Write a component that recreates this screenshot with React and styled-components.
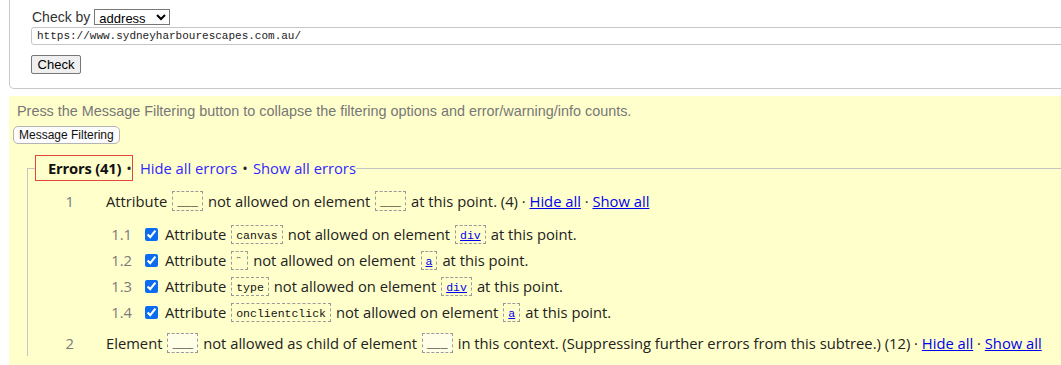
import React from "react";
import styled, { createGlobalStyle } from "styled-components";

const Global = createGlobalStyle`
  html, body { margin: 0; padding: 0; background: #fff; overflow: hidden; }
  body { font-family: "Liberation Sans", Arial, sans-serif; }
`;

const Page = styled.div`
  width: 1061px;
  height: 365px;
  overflow: hidden;
`;

const Panel = styled.form`
  margin: 0 -40px 0 9px;
  border: 1px solid #c8c8c8;
  border-top: none;
  border-radius: 0 0 5px 5px;
  padding: 9px 0 14px 21px;
`;

const CheckByRow = styled.div`
  display: flex;
  align-items: center;
  height: 16px;
  font-size: 14px;
  color: #333;
`;

const Label = styled.span`
  margin: 0 4px 0 1px;
`;

const Select = styled.select`
  height: 16px;
  width: 76px;
  font: 13px "Liberation Sans", Arial, sans-serif;
  color: #000;
  border: 1px solid #767676;
  border-radius: 0;
  padding: 0;
  background: #fff;
`;

const UrlInput = styled.input`
  display: block;
  box-sizing: border-box;
  margin-top: 2px;
  width: 100%;
  height: 18px;
  border: 1px solid #c6c6c6;
  border-radius: 3px;
  padding: 0 5px;
  font: 11px "Liberation Mono", "Courier New", monospace;
  color: #222;
  background: #fff;
  outline: none;
`;

const CheckButton = styled.button`
  display: block;
  margin-top: 10px;
  width: 50px;
  height: 19px;
  padding: 0;
  font: 13px "Liberation Sans", Arial, sans-serif;
  color: #000;
  background: #efefef;
  border: 1px solid #767676;
  border-radius: 2px;
`;

const Results = styled.section`
  margin: 7px -40px 0 9px;
  background: #ffffcc;
  padding: 0 0 40px 4px;
`;

const Hint = styled.p`
  margin: 0 0 0 4px;
  padding-top: 7px;
  font-size: 14.4px;
  line-height: 16px;
  color: #777;
`;

const FilterButton = styled.button`
  display: block;
  margin-top: 7px;
  height: 18px;
  padding: 0 5px;
  font: 12px "Liberation Sans", Arial, sans-serif;
  color: #111;
  background: #fcfcfc;
  border: 1px solid #b4b4b4;
  border-radius: 5px;
`;

const Fieldset = styled.fieldset`
  margin: 11px 0 0 14px;
  padding: 7px 0 0 7px;
  border: none;
  border-top: 1px solid #c4c4c4;
  border-left: 1px solid #c4c4c4;
  font-family: "Open Sans", "Noto Sans", sans-serif;
  font-size: 14.75px;
  color: #222;
`;

const Legend = styled.legend`
  padding: 0;
  display: flex;
  align-items: center;
  line-height: 24px;
`;

const ErrorsTitle = styled.span`
  display: inline-flex;
  align-items: center;
  border: 1px solid #e4463b;
  padding: 0 0 0 12px;
  height: 24px;
`;

const Strong = styled.strong`
  font-weight: 700;
  color: #111;
  letter-spacing: -0.2px;
`;

const Bullet = styled.span`
  margin: 0 ${(p) => p.$r || 0}px 0 ${(p) => p.$l || 0}px;
  color: #222;
`;

const LegendLink = styled.a`
  color: #3326ff;
  text-decoration: none;
`;

const Row = styled.div`
  display: flex;
  align-items: center;
  height: 26px;
  white-space: nowrap;
`;

const Num = styled.span`
  width: 39px;
  text-align: right;
  color: #7a7a7a;
  margin-right: ${(p) => p.$gap}px;
`;

const SubList = styled.div`
  margin: 7px 0 5px 58px;
`;

const Check = styled.input`
  margin: 0 7px 0 13px;
  width: 13px;
  height: 13px;
  accent-color: #0b6cf1;
`;

const Code = styled.code`
  display: inline-block;
  box-sizing: border-box;
  font: 11.5px "Liberation Mono", "Courier New", monospace;
  height: ${(p) => (p.$tall ? 20 : 19)}px;
  line-height: ${(p) => (p.$tall ? 21 : 19)}px;
  padding: 0 4px;
  margin: 0 5px;
  border: 1px dashed #9a9a9a;
  background: ${(p) => (p.$light ? "#ffffe8" : "transparent")};
  color: #111;
  overflow: hidden;
`;

const CodeLink = styled.a`
  color: #0000ee;
  text-decoration: underline;
`;

const Link = styled.a`
  color: #0000ee;
  text-decoration: underline;
`;

const Dot = () => <span>&nbsp;·&nbsp;</span>;

const subItems = [
  { n: "1.1", attr: "canvas", el: "div" },
  { n: "1.2", attr: "\u02dd", el: "a" },
  { n: "1.3", attr: "type", el: "div" },
  { n: "1.4", attr: "onclientclick", el: "a" },
];

export default function App() {
  return (
    <Page>
      <Global />
      <Panel onSubmit={(e) => e.preventDefault()}>
        <CheckByRow>
          <Label>Check by</Label>
          <Select defaultValue="address">
            <option value="address">address</option>
            <option value="file">file upload</option>
            <option value="text">text input</option>
          </Select>
        </CheckByRow>
        <UrlInput defaultValue="https://www.sydneyharbourescapes.com.au/" />
        <CheckButton type="button">Check</CheckButton>
      </Panel>
      <Results>
        <Hint>
          Press the Message Filtering button to collapse the filtering options
          and error/warning/info counts.
        </Hint>
        <FilterButton type="button">Message Filtering</FilterButton>
        <Fieldset>
          <Legend>
            <ErrorsTitle>
              <Strong>Errors (41)</Strong>
              <Bullet $l={5}>•</Bullet>
            </ErrorsTitle>
            <Bullet $l={7} />
            <LegendLink href="#">Hide all errors</LegendLink>
            <Bullet $l={5} $r={5}>•</Bullet>
            <LegendLink href="#">Show all errors</LegendLink>
          </Legend>
          <Row>
            <Num $gap={32}>1</Num>
            Attribute<Code $tall>___</Code>not allowed on element
            <Code $tall>___</Code>at this point. (4)
            <Dot />
            <Link href="#">Hide all</Link>
            <Dot />
            <Link href="#">Show all</Link>
          </Row>
          <SubList>
            {subItems.map((it) => (
              <Row key={it.n}>
                <Num $gap={0}>{it.n}</Num>
                <Check type="checkbox" defaultChecked />
                Attribute<Code>{it.attr}</Code>not allowed on element
                <Code>
                  <CodeLink href="#">{it.el}</CodeLink>
                </Code>
                at this point.
              </Row>
            ))}
          </SubList>
          <Row>
            <Num $gap={32}>2</Num>
            Element<Code $tall $light>___</Code>not allowed as child of element
            <Code $tall $light>___</Code>in this context. (Suppressing further
            errors from this subtree.) (12)
            <Dot />
            <Link href="#">Hide all</Link>
            <Dot />
            <Link href="#">Show all</Link>
          </Row>
        </Fieldset>
      </Results>
    </Page>
  );
}
